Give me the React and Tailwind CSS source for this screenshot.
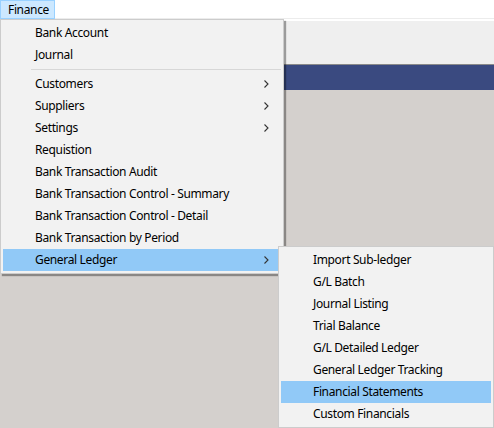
import React from "react";

const mainItems = [
  { label: "Bank Account" },
  { label: "Journal" },
  { sep: true },
  { label: "Customers", sub: true },
  { label: "Suppliers", sub: true },
  { label: "Settings", sub: true },
  { label: "Requistion" },
  { label: "Bank Transaction Audit" },
  { label: "Bank Transaction Control - Summary" },
  { label: "Bank Transaction Control - Detail" },
  { label: "Bank Transaction by Period" },
  { label: "General Ledger", sub: true, active: true },
];

const glItems = [
  "Import Sub-ledger",
  "G/L Batch",
  "Journal Listing",
  "Trial Balance",
  "G/L Detailed Ledger",
  "General Ledger Tracking",
  "Financial Statements",
  "Custom Financials",
];

// chevron dibujado como en el menú de Windows
function Chevron() {
  return (
    <svg width="5" height="8" viewBox="0 0 5 8" className="shrink-0">
      <path d="M0.5 0.5 L4 4 L0.5 7.5" fill="none" stroke="#333" strokeWidth="1.1" />
    </svg>
  );
}

function MenuItem({ label, sub, active }) {
  return (
    <div
      className={
        "h-[22px] flex items-center pl-[32px] pr-[12px] " +
        (active ? "bg-[#91c9f7]" : "")
      }
    >
      <span className="flex-1 whitespace-nowrap">{label}</span>
      {sub && <Chevron />}
    </div>
  );
}

export default function App() {
  return (
    <div
      className="relative w-[494px] h-[428px] overflow-hidden bg-[#d4d0cd] text-[12px] tracking-[-0.35px] text-black"
      style={{ fontFamily: '"Segoe UI", "Noto Sans", sans-serif' }}
    >
      {/* barra de menú */}
      <div className="h-[18px] bg-white flex">
        <div className="h-[19px] pl-[7px] pr-[5px] flex items-center bg-[#cce8ff] border border-[#99d1ff]">
          Finance
        </div>
      </div>
      <div className="h-px bg-[#ececec]" />
      <div className="h-[2px] bg-white" />
      {/* toolbar */}
      <div className="h-[43px] bg-[#efefef]" />
      <div className="h-px bg-[#8a8a8a]" />
      <div className="h-[25px] bg-[#3a4a80]" />

      {/* menú principal */}
      <div className="absolute left-0 top-[19px] w-[284px] p-[2px] bg-[#f2f2f2] border border-[#cccccc] shadow-[2px_2px_1px_rgba(0,0,0,0.35)]">
        {mainItems.map((it, i) =>
          it.sep ? (
            <div key={i} className="h-[7px] flex items-center pl-[28px]">
              <div className="h-px w-full bg-[#d7d7d7]" />
            </div>
          ) : (
            <MenuItem key={i} {...it} />
          )
        )}
      </div>

      {/* submenú General Ledger */}
      <div className="absolute left-[278px] top-[246px] w-[216px] p-[2px] bg-[#f2f2f2] border border-[#cccccc]">
        {glItems.map((label) => (
          <MenuItem key={label} label={label} active={label === "Financial Statements"} />
        ))}
      </div>
    </div>
  );
}
